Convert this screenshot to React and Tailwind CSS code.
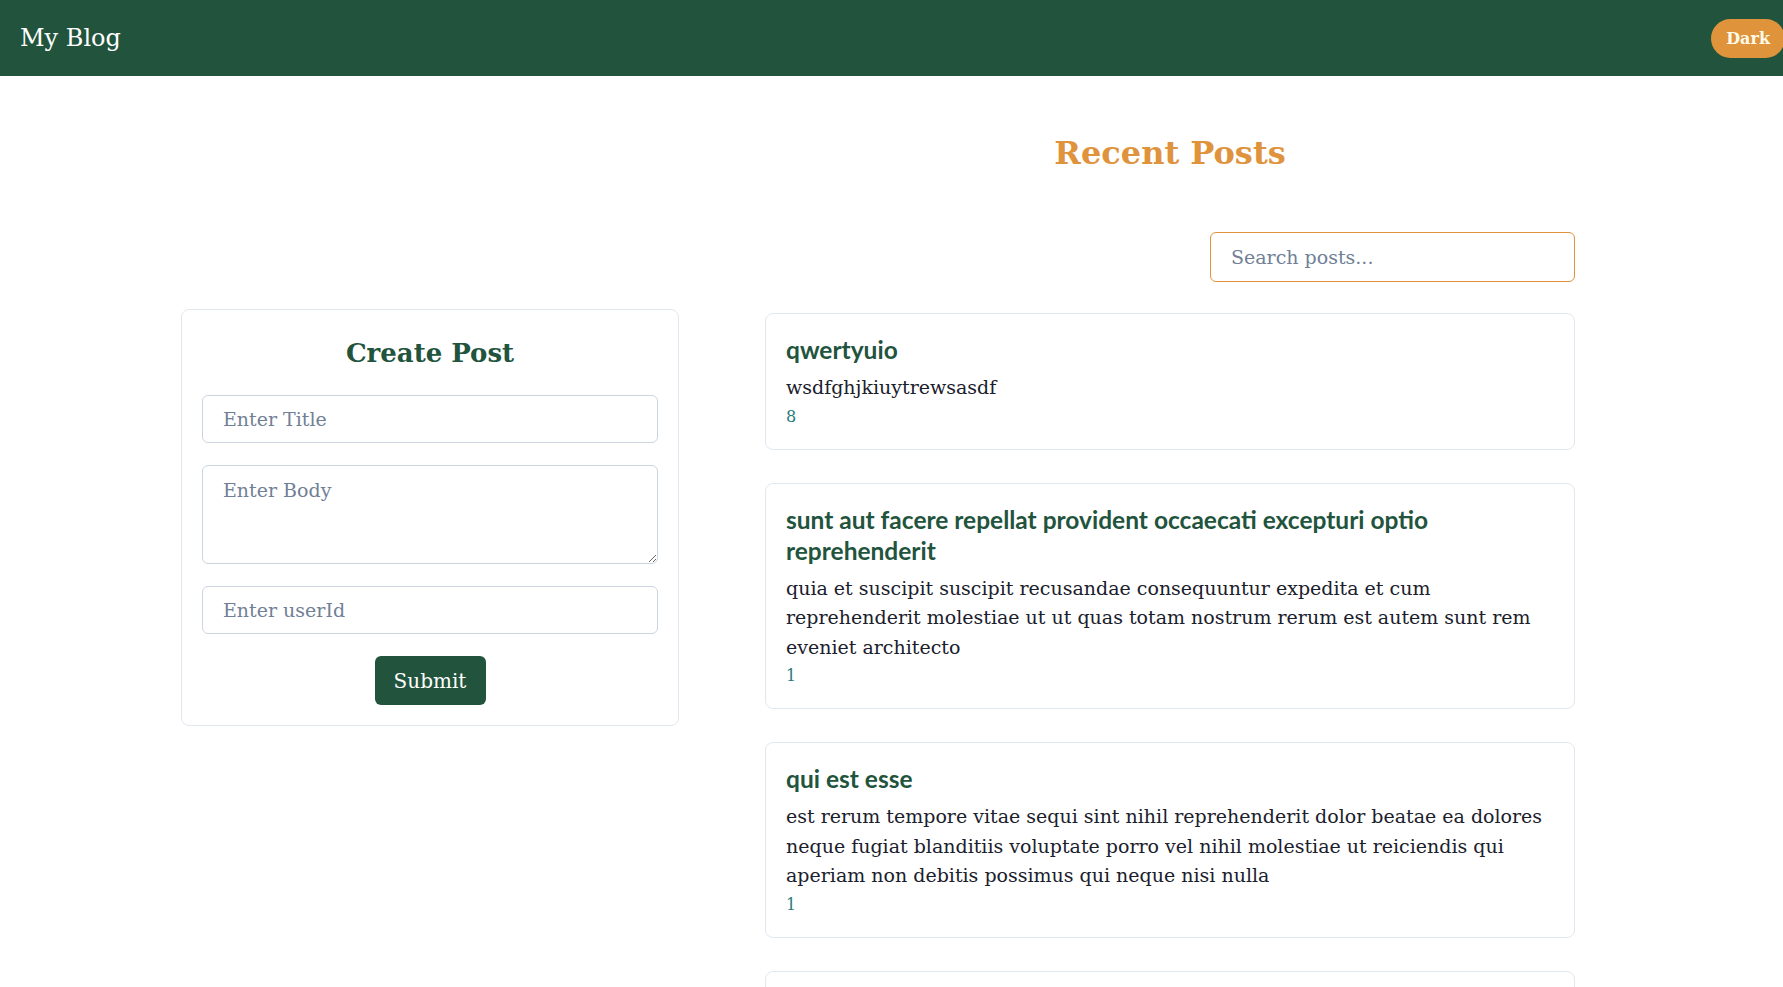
import React from "react";

const serif = { fontFamily: '"DejaVu Serif", "Liberation Serif", serif' };

const posts = [
  { title: "qwertyuio", body: "wsdfghjkiuytrewsasdf", userId: 8 },
  {
    title: "sunt aut facere repellat provident occaecati excepturi optio reprehenderit",
    body: "quia et suscipit suscipit recusandae consequuntur expedita et cum reprehenderit molestiae ut ut quas totam nostrum rerum est autem sunt rem eveniet architecto",
    userId: 1,
  },
  {
    title: "qui est esse",
    body: "est rerum tempore vitae sequi sint nihil reprehenderit dolor beatae ea dolores neque fugiat blanditiis voluptate porro vel nihil molestiae ut reiciendis qui aperiam non debitis possimus qui neque nisi nulla",
    userId: 1,
  },
  {
    title: "ea molestias quasi exercitationem repellat qui ipsa sit aut",
    body: "et iusto sed quo iure voluptatem occaecati omnis eligendi aut ad voluptatem doloribus vel accusantium quis pariatur molestiae porro eius odio et labore et velit aut",
    userId: 1,
  },
];

export default function App() {
  return (
    <div className="min-h-screen w-full overflow-hidden bg-white font-['DejaVu_Serif',serif]" style={serif}>
      <nav className="flex h-[76px] items-center justify-between overflow-hidden bg-[#22543d] pl-5">
        <span className="text-[24px] text-white">My Blog</span>
        <button className="mr-[-2px] rounded-full bg-[#df933a] px-[15px] py-[8px] text-[16px] font-bold leading-[23px] text-[#fffbea]">
          Dark
        </button>
      </nav>

      <div className="ml-[181px] flex items-start gap-[86px]">
        <div className="mt-[233px] w-[498px] rounded-lg border border-[#e2e8f0] bg-white p-5">
          <h2 className="mb-[21px] mt-[2px] text-center text-[26px] font-bold leading-[42px] text-[#22543d]">Create Post</h2>
          <div className="flex flex-col gap-[22px]">
            <input
              className="h-[48px] w-full rounded-md border border-[#cbd5e0] px-5 text-[19px] outline-none placeholder:text-[#718096]"
              placeholder="Enter Title"
            />
            <textarea
              className="block h-[99px] w-full rounded-md border border-[#cbd5e0] px-5 py-[10px] text-[19px] leading-[28px] outline-none placeholder:text-[#718096]"
              placeholder="Enter Body"
            />
            <input
              className="h-[48px] w-full rounded-md border border-[#cbd5e0] px-5 text-[19px] outline-none placeholder:text-[#718096]"
              placeholder="Enter userId"
            />
            <div className="flex justify-center">
              <button className="h-[49px] w-[111px] rounded-md bg-[#22543d] text-[20px] text-white">Submit</button>
            </div>
          </div>
        </div>

        <div className="w-[810px]">
          <h1 className="mt-[57px] text-center text-[32px] font-bold leading-[40px] text-[#df933d]">Recent Posts</h1>
          <div className="mt-[59px] flex justify-end">
            <input
              className="h-[50px] w-[365px] rounded-md border border-[#df933d] px-5 text-[19px] outline-none placeholder:text-[#718096]"
              placeholder="Search posts..."
            />
          </div>
          <div className="mt-[31px] flex flex-col gap-[33px]">
            {posts.map((p, i) => (
              <div key={i} className="rounded-lg border border-[#e2e8f0] bg-white px-5 pb-[20px] pt-5">
                <h3 className="mb-2 text-[24.5px] font-bold leading-[31px] text-[#22543d]" style={{ fontFamily: "Lato, sans-serif" }}>
                  {p.title}
                </h3>
                <p className="text-[19px] leading-[29.5px] text-[#1a202c]">{p.body}</p>
                <p className="mt-[2px] text-[16px] leading-[24px] text-[#2c7a7b]">{p.userId}</p>
              </div>
            ))}
          </div>
        </div>
      </div>
    </div>
  );
}
